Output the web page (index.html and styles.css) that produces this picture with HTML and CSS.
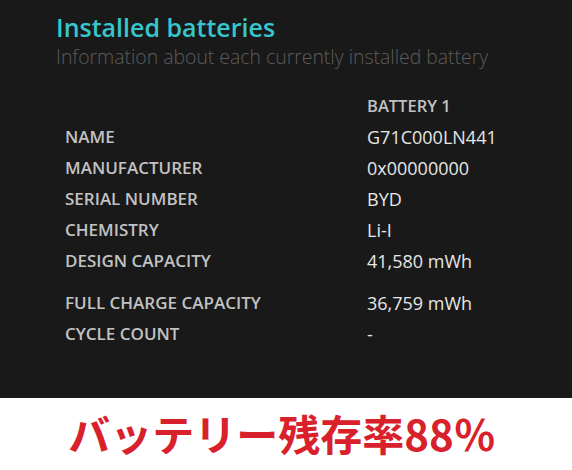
FILE: index.html
```html
<!DOCTYPE html>
<html>
<head>
<meta charset="utf-8">
<link rel="stylesheet" href="styles.css">
</head>
<body>
<div class="panel">
  <h1 class="title">Installed batteries</h1>
  <p class="subtitle">Information about each currently installed battery</p>
  <div class="grid">
    <div class="label"></div><div class="head">BATTERY 1</div>
    <div class="label">NAME</div><div class="value">G71C000LN441</div>
    <div class="label">MANUFACTURER</div><div class="value">0x00000000</div>
    <div class="label">SERIAL NUMBER</div><div class="value">BYD</div>
    <div class="label">CHEMISTRY</div><div class="value">Li-I</div>
    <div class="label">DESIGN CAPACITY</div><div class="value">41,580 mWh</div>
    <div class="spacer"></div>
    <div class="label">FULL CHARGE CAPACITY</div><div class="value">36,759 mWh</div>
    <div class="label">CYCLE COUNT</div><div class="value">-</div>
  </div>
</div>
<div class="caption">バッテリー残存率88％</div>
</body>
</html>
```
FILE: styles.css
```css
html, body {
  margin: 0;
  padding: 0;
  background: #ffffff;
}
body {
  width: 572px;
  height: 470px;
  overflow: hidden;
  font-family: "Open Sans", "Noto Sans", sans-serif;
}
.panel {
  background: #191919;
  height: 398px;
  padding: 11px 0 0 56px;
  box-sizing: border-box;
}
.title {
  margin: 0;
  font-size: 25px;
  font-weight: 600;
  color: #36c6cc;
  line-height: 33px;
}
.subtitle {
  margin: 0;
  font-size: 19.4px;
  font-weight: 300;
  color: #5c5c5c;
  line-height: 26px;
}
.grid {
  display: grid;
  grid-template-columns: 302px auto;
  grid-template-rows: repeat(6, 31px) 11px 31px 31px;
  align-items: center;
  margin: 20px 0 0 9px;
}
.spacer {
  grid-column: 1 / -1;
}
.label {
  font-size: 17px;
  font-weight: 600;
  color: #c2c2c2;
}
.head {
  font-size: 16.5px;
  font-weight: 600;
  color: #c2c2c2;
}
.value {
  font-size: 18px;
  color: #e6e6e6;
}
.caption {
  text-align: center;
  font-family: "Noto Sans CJK JP", sans-serif;
  font-weight: 700;
  font-size: 42px;
  color: #d8212b;
  line-height: 70px;
  padding-right: 8px;
}
```
